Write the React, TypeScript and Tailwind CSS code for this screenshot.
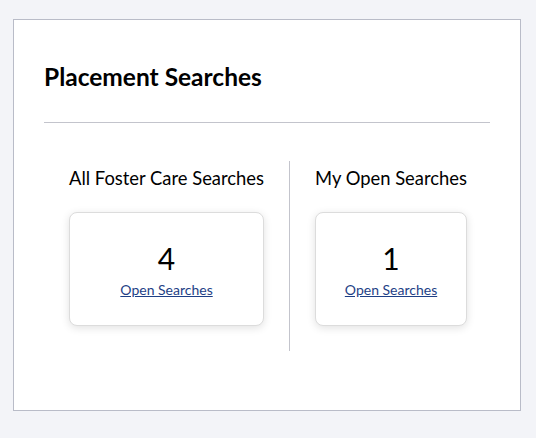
export default function App() {
  const cols = [
    { title: 'All Foster Care Searches', count: 4 },
    { title: 'My Open Searches', count: 1 },
  ]
  return (
    <div className="min-h-[438px] w-full bg-[#f3f4f8] pl-[13px] pt-[19px]" style={{ fontFamily: 'Lato, "Noto Sans", sans-serif' }}>
      <div className="w-[508px] h-[392px] bg-white border border-[#b9bcc8] px-[30px] pt-[42px]">
        <h2 className="text-[24.5px] leading-[29px] font-bold text-black">Placement Searches</h2>
        <div className="mt-[31px] h-px bg-[#c3c4cc]" />
        <div className="mt-[38px] flex">
          {cols.map((c, i) => (
            <div key={c.title} className={`flex flex-col px-[25px] pb-[25px] ${i > 0 ? 'border-l border-[#c3c4cc]' : ''}`}>
              <div className="text-[18.4px] leading-[34px] text-black whitespace-nowrap">{c.title}</div>
              <div className="mt-[17px] h-[114px] rounded-lg border border-[#dcdcdc] bg-white shadow-[0_2px_8px_rgba(0,0,0,0.12)] flex flex-col items-center pt-[28px]">
                <div className="text-[30px] leading-[34px] text-black">{c.count}</div>
                <a href="#" className="mt-[6px] text-[14px] leading-[17px] text-[#1e3f86] underline">Open Searches</a>
              </div>
            </div>
          ))}
        </div>
      </div>
    </div>
  )
}
